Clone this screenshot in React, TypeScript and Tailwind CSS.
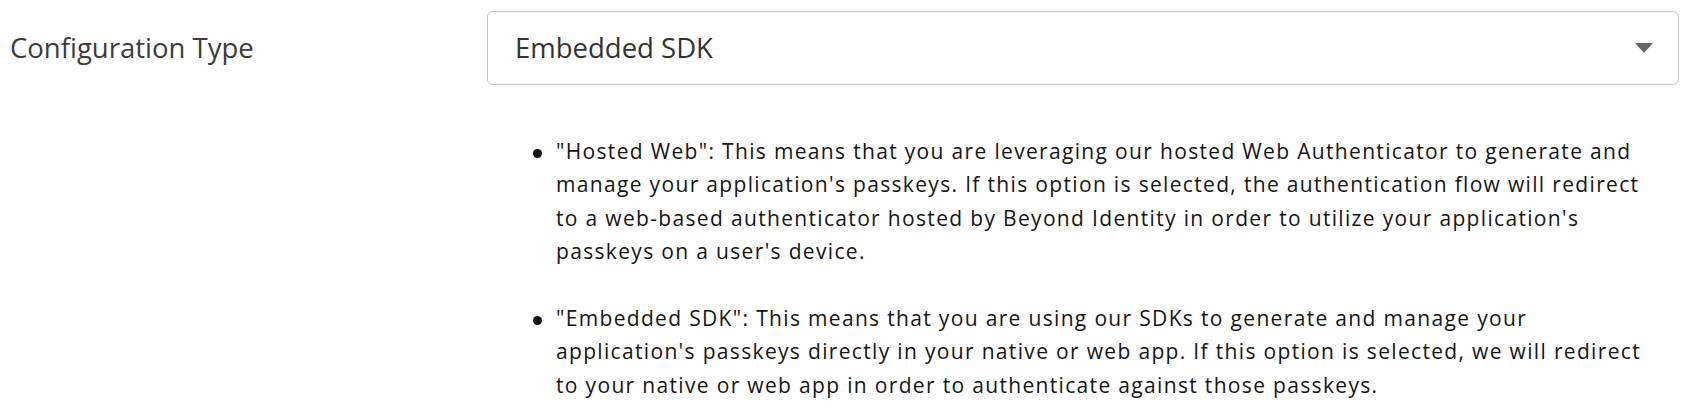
import React from 'react';

const options = [
  '"Hosted Web": This means that you are leveraging our hosted Web Authenticator to generate and manage your application\'s passkeys. If this option is selected, the authentication flow will redirect to a web-based authenticator hosted by Beyond Identity in order to utilize your application\'s passkeys on a user\'s device.',
  '"Embedded SDK": This means that you are using our SDKs to generate and manage your application\'s passkeys directly in your native or web app. If this option is selected, we will redirect to your native or web app in order to authenticate against those passkeys.',
];

const App: React.FC = () => {
  return (
    <div className="w-full h-[408px] bg-white font-['Open_Sans',sans-serif] overflow-hidden">
      <div className="flex pl-[10px] pr-[11px] pt-[11px]">
        {/* Label */}
        <div className="w-[477px] h-[74px] flex items-center shrink-0">
          <span className="text-[27.5px] text-[#3c3c3c]">Configuration Type</span>
        </div>

        <div className="flex-1 min-w-0">
          {/* Select */}
          <div className="h-[74px] border border-[#c6c6c6] rounded-[6px] flex items-center justify-between pl-[27px] pr-[25px]">
            <span className="text-[27.5px] text-[#333333]">Embedded SDK</span>
            <svg width="18" height="10" viewBox="0 0 18 10">
              <polygon points="0,0 18,0 9,10" fill="#666666" />
            </svg>
          </div>

          {/* Option descriptions */}
          <ul className="mt-[50px] pl-[46px] pr-[12px] flex flex-col gap-[33.4px]">
            {options.map((text, i) => (
              <li key={i} className="flex">
                <div className="h-[33.4px] w-[23px] shrink-0 flex items-center">
                  <span className="block w-[9px] h-[9px] rounded-full bg-[#151515] mt-[3px]"></span>
                </div>
                <p className="text-[21px] leading-[33.4px] text-[#151515] tracking-[1.33px]">{text}</p>
              </li>
            ))}
          </ul>
        </div>
      </div>
    </div>
  );
};

export default App;
